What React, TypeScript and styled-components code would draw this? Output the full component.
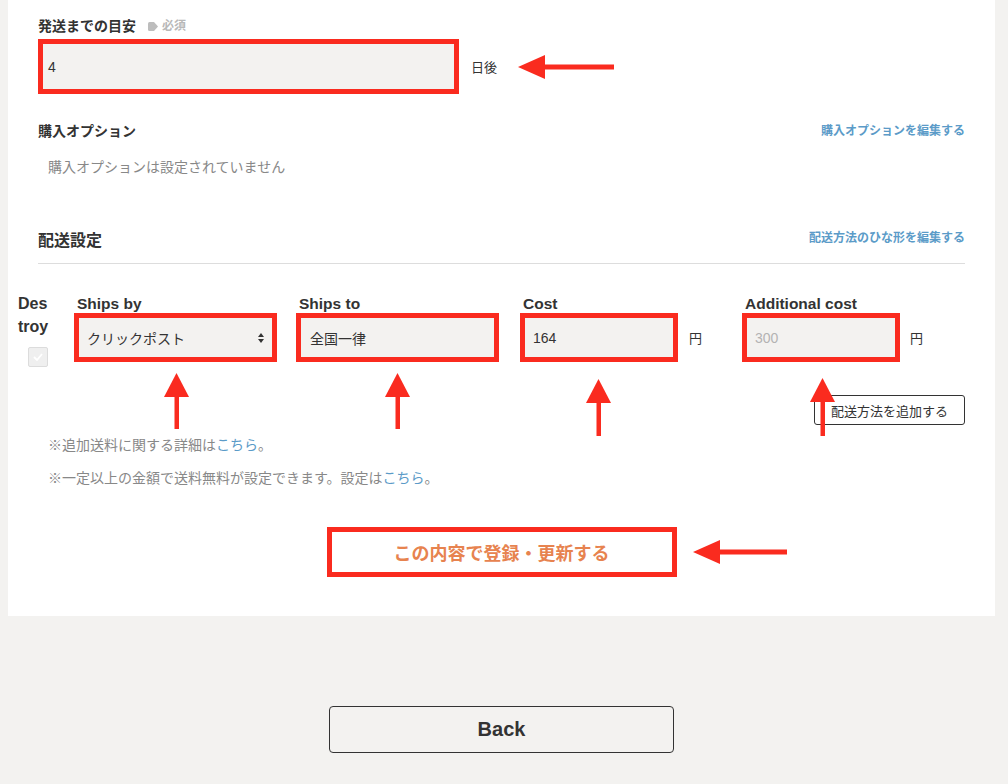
import React from 'react';
import styled, { createGlobalStyle } from 'styled-components';

const RED = '#fa2b1f';
const LINK = '#5b9bc8';

const GlobalStyle = createGlobalStyle`
  body {
    margin: 0;
    background: #f3f2f0;
    font-family: "Liberation Sans", "Noto Sans CJK JP", sans-serif;
    color: #333;
  }
`;

const Page = styled.div`
  min-height: 784px;
`;

const Card = styled.section`
  position: relative;
  margin-left: 8px;
  width: 987px;
  box-sizing: border-box;
  background: #fff;
  padding: 16px 30px 39px;
`;

const FieldLabel = styled.div`
  display: flex;
  align-items: center;
  gap: 12px;
  font-size: 14px;
  font-weight: 700;
  line-height: 20px;
`;

const Required = styled.span`
  display: inline-flex;
  align-items: center;
  gap: 4px;
  font-size: 12px;
  color: #b8b8b8;
`;

const InlineRow = styled.div<{ $mt?: number }>`
  display: flex;
  align-items: center;
  margin-top: ${({ $mt }) => $mt ?? 0}px;
`;

const RedBox = styled.div<{ $w: number; $h: number; $pad?: number; $muted?: boolean }>`
  width: ${({ $w }) => $w}px;
  height: ${({ $h }) => $h}px;
  box-sizing: border-box;
  border: 5px solid ${RED};
  background: #f3f2f0;
  display: flex;
  align-items: center;
  justify-content: space-between;
  padding: 0 7px 0 ${({ $pad }) => $pad ?? 8}px;
  font-size: 14px;
  color: ${({ $muted }) => ($muted ? '#b3b3b3' : '#333')};
`;

const Unit = styled.span<{ $gap: number }>`
  margin-left: ${({ $gap }) => $gap}px;
  font-size: 13px;
`;

const SectionHeader = styled.div<{ $mt: number; $align: string }>`
  display: flex;
  justify-content: space-between;
  align-items: ${({ $align }) => $align};
  margin-top: ${({ $mt }) => $mt}px;
`;

const SectionTitle = styled.h3<{ $size: number }>`
  margin: 0;
  font-size: ${({ $size }) => $size}px;
  font-weight: 700;
  line-height: 20px;
`;

const EditLink = styled.a<{ $lh: number }>`
  font-size: 12px;
  font-weight: 700;
  line-height: ${({ $lh }) => $lh}px;
  color: ${LINK};
  text-decoration: none;
`;

const EmptyText = styled.p`
  margin: 16px 0 0;
  padding-left: 10px;
  font-size: 14px;
  line-height: 20px;
  color: #888;
`;

const Divider = styled.hr`
  margin: 12px 0 0;
  border: 0;
  border-top: 1px solid #ddd;
`;

const ShippingTable = styled.div`
  display: flex;
  align-items: flex-start;
  margin: 30px 0 0 -20px;
`;

const DestroyCol = styled.div`
  width: 56px;
  margin-top: -2px;
  font-size: 16px;
  font-weight: 700;
  line-height: 23px;
`;

const CheckBox = styled.span`
  display: flex;
  align-items: center;
  justify-content: center;
  width: 20px;
  height: 20px;
  box-sizing: border-box;
  margin: 9px 0 0 10px;
  background: #efefef;
  border: 1px solid #dcdcdc;
  border-radius: 2px;
`;

const Column = styled.div<{ $w?: number }>`
  width: ${({ $w }) => ($w ? `${$w}px` : 'auto')};
  flex: ${({ $w }) => ($w ? 'none' : '1')};
`;

const ColLabel = styled.div`
  padding-left: 3px;
  font-size: 15.5px;
  font-weight: 700;
  line-height: 19px;
`;

const ActionsRow = styled.div`
  display: flex;
  justify-content: flex-end;
  margin-top: 28px;
`;

const AddButton = styled.button`
  height: 30px;
  padding: 0 16px;
  background: #fff;
  border: 1px solid #333;
  border-radius: 3px;
  font-family: inherit;
  font-size: 13px;
  color: #333;
`;

const Note = styled.p<{ $mt: number }>`
  margin: ${({ $mt }) => $mt}px 0 0;
  padding-left: 10px;
  font-size: 14px;
  line-height: 20px;
  color: #888;
`;

const NoteLink = styled.a`
  color: ${LINK};
  text-decoration: none;
`;

const SubmitRow = styled.div`
  display: flex;
  justify-content: center;
  margin-top: 39px;
`;

const SubmitButton = styled.button`
  width: 350px;
  height: 50px;
  background: #fff;
  border: 5px solid ${RED};
  font-family: inherit;
  font-size: 18px;
  font-weight: 700;
  color: #e7834f;
`;

const BackWrap = styled.div`
  width: 987px;
  margin-left: 8px;
  display: flex;
  justify-content: center;
  padding-top: 90px;
`;

const BackButton = styled.button`
  width: 345px;
  height: 47px;
  background: transparent;
  border: 1px solid #333;
  border-radius: 4px;
  font-family: "Liberation Sans", sans-serif;
  font-size: 20px;
  font-weight: 700;
  color: #333;
`;

const ArrowSvg = styled.svg<{ $x: number; $y: number }>`
  position: absolute;
  left: ${({ $x }) => $x}px;
  top: ${({ $y }) => $y}px;
  z-index: 2;
  pointer-events: none;
`;

const LeftArrow: React.FC<{ x: number; y: number; len: number }> = ({ x, y, len }) => (
  <ArrowSvg $x={x} $y={y} width={len} height="24" viewBox={`0 0 ${len} 24`}>
    <path d="M0 12 L27 0 L27 24 Z" fill={RED} />
    <rect x="26" y="9.5" width={len - 26} height="5" fill={RED} />
  </ArrowSvg>
);

const UpArrow: React.FC<{ x: number; y: number; len: number }> = ({ x, y, len }) => (
  <ArrowSvg $x={x} $y={y} width="25" height={len} viewBox={`0 0 25 ${len}`}>
    <path d="M12.5 0 L25 24 L0 24 Z" fill={RED} />
    <rect x="10.5" y="23" width="4.5" height={len - 23} fill={RED} />
  </ArrowSvg>
);

const TagIcon = () => (
  <svg width="10" height="9" viewBox="0 0 10 9">
    <path d="M1.5 0 H6 L10 4.5 L6 9 H1.5 Q0 9 0 7.5 V1.5 Q0 0 1.5 0 Z" fill="#bdbdbd" />
  </svg>
);

const SortIcon = () => (
  <svg width="8" height="12" viewBox="0 0 8 12">
    <path d="M1 5 L4 1 L7 5 Z M1 7 L4 11 L7 7 Z" fill="#333" />
  </svg>
);

const CheckIcon = () => (
  <svg width="10" height="8" viewBox="0 0 10 8">
    <path d="M1 4 L4 7 L9 1" stroke="#fff" strokeWidth="1.8" fill="none" />
  </svg>
);

const App: React.FC = () => (
  <Page>
    <GlobalStyle />
    <Card>
      <FieldLabel>
        発送までの目安
        <Required>
          <TagIcon />
          必須
        </Required>
      </FieldLabel>
      <InlineRow $mt={3}>
        <RedBox $w={421} $h={55} $pad={5}>4</RedBox>
        <Unit $gap={12}>日後</Unit>
      </InlineRow>

      <SectionHeader $mt={27} $align="center">
        <SectionTitle $size={14}>購入オプション</SectionTitle>
        <EditLink $lh={20} href="#">購入オプションを編集する</EditLink>
      </SectionHeader>
      <EmptyText>購入オプションは設定されていません</EmptyText>

      <SectionHeader $mt={54} $align="flex-start">
        <SectionTitle $size={16}>配送設定</SectionTitle>
        <EditLink $lh={14} href="#">配送方法のひな形を編集する</EditLink>
      </SectionHeader>
      <Divider />

      <ShippingTable>
        <DestroyCol>
          Des
          <br />
          troy
          <CheckBox>
            <CheckIcon />
          </CheckBox>
        </DestroyCol>
        <Column $w={222}>
          <ColLabel>Ships by</ColLabel>
          <RedBox $w={203} $h={49}>
            クリックポスト
            <SortIcon />
          </RedBox>
        </Column>
        <Column $w={224}>
          <ColLabel>Ships to</ColLabel>
          <RedBox $w={203} $h={49} $pad={9}>全国一律</RedBox>
        </Column>
        <Column $w={222}>
          <ColLabel>Cost</ColLabel>
          <InlineRow>
            <RedBox $w={158} $h={49} $pad={8}>164</RedBox>
            <Unit $gap={11}>円</Unit>
          </InlineRow>
        </Column>
        <Column>
          <ColLabel>Additional cost</ColLabel>
          <InlineRow>
            <RedBox $w={158} $h={49} $pad={8} $muted>300</RedBox>
            <Unit $gap={10}>円</Unit>
          </InlineRow>
        </Column>
      </ShippingTable>

      <ActionsRow>
        <AddButton>配送方法を追加する</AddButton>
      </ActionsRow>

      <Note $mt={10}>
        ※追加送料に関する詳細は<NoteLink href="#">こちら</NoteLink>。
      </Note>
      <Note $mt={13}>
        ※一定以上の金額で送料無料が設定できます。設定は<NoteLink href="#">こちら</NoteLink>。
      </Note>

      <SubmitRow>
        <SubmitButton>この内容で登録・更新する</SubmitButton>
      </SubmitRow>

      <LeftArrow x={510} y={55} len={96} />
      <UpArrow x={155.5} y={373} len={56} />
      <UpArrow x={376.5} y={373} len={56} />
      <UpArrow x={577.5} y={379} len={57} />
      <UpArrow x={801.5} y={378} len={58} />
      <LeftArrow x={685} y={540} len={94} />
    </Card>
    <BackWrap>
      <BackButton>Back</BackButton>
    </BackWrap>
  </Page>
);

export default App;
